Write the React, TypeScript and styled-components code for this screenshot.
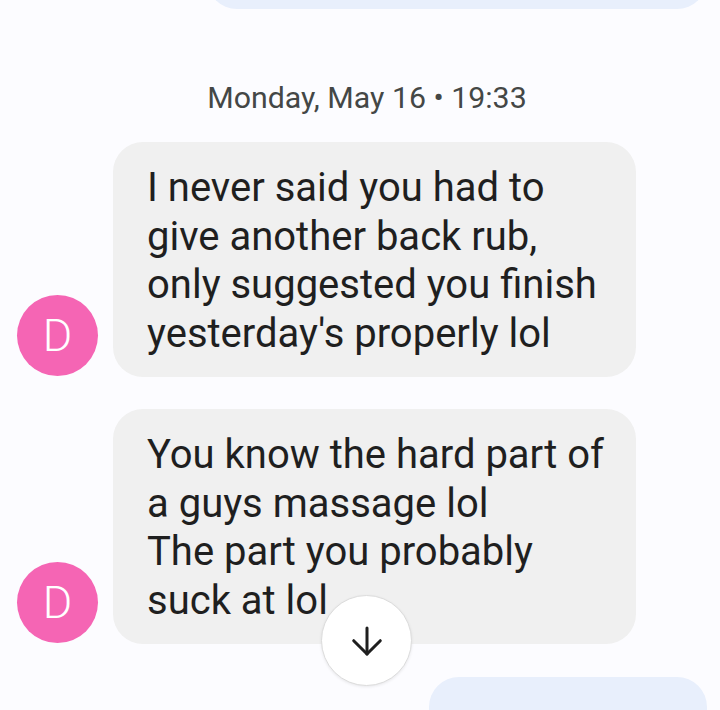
import React from "react";
import styled, { createGlobalStyle } from "styled-components";

const Global = createGlobalStyle`
  html, body { margin: 0; padding: 0; background: #fcfcff; }
  body { font-family: Roboto, "Noto Sans", "Liberation Sans", sans-serif; }
`;

const Page = styled.div`
  position: relative;
  width: 720px;
  height: 710px;
  overflow: hidden;
  background: #fcfcff;
  display: flex;
  flex-direction: column;
`;

const OutRow = styled.div<{ $top?: number }>`
  display: flex;
  justify-content: flex-end;
  padding-right: 13px;
  margin-top: ${(p) => p.$top ?? 0}px;
`;

const OutBubble = styled.div<{ $width: number }>`
  width: ${(p) => p.$width}px;
  min-height: 90px;
  background: #e8effc;
  border-radius: 30px;
  flex-shrink: 0;
`;

const DateHeader = styled.div`
  margin-top: 71px;
  text-align: center;
  font-size: 30.3px;
  line-height: 36px;
  color: #444746;
  padding-left: 14px;
`;

const Row = styled.div<{ $top: number }>`
  display: flex;
  align-items: flex-end;
  gap: 15px;
  padding-left: 17px;
  margin-top: ${(p) => p.$top}px;
`;

const Avatar = styled.div`
  width: 81px;
  height: 81px;
  border-radius: 50%;
  background: #f565b4;
  color: #ffffff;
  display: flex;
  align-items: center;
  justify-content: center;
  font-size: 45px;
  font-weight: 300;
  flex-shrink: 0;
  margin-bottom: 1px;
`;

const Bubble = styled.div`
  width: 523px;
  box-sizing: border-box;
  background: #f0f0f0;
  border-radius: 30px;
  padding: 22px 20px 18px 34px;
  font-size: 40px;
  line-height: 48.7px;
  color: #1f1f1f;
  white-space: pre;
`;

const ScrollButton = styled.button`
  position: absolute;
  left: 321px;
  top: 595px;
  width: 91px;
  height: 91px;
  border-radius: 50%;
  background: #ffffff;
  border: 1px solid #dcdcdc;
  box-shadow: 0 1px 3px rgba(0, 0, 0, 0.08);
  display: flex;
  align-items: center;
  justify-content: center;
  padding: 0;
  cursor: pointer;
`;

const ArrowDown = () => (
  <svg width="32" height="32" viewBox="0 0 32 32" fill="none" stroke="#1f1f1f" strokeWidth="3" strokeLinecap="round" strokeLinejoin="round">
    <line x1="16" y1="3" x2="16" y2="29" />
    <polyline points="2.7,15.7 16,29 29.3,15.7" />
  </svg>
);

const messages = [
  ["I never said you had to", "give another back rub,", "only suggested you finish", "yesterday's properly lol"],
  ["You know the hard part of", "a guys massage lol", "The part you probably", "suck at lol"],
];

export default function App() {
  return (
    <>
      <Global />
      <Page>
        <OutRow $top={-81}>
          <OutBubble $width={500} />
        </OutRow>
        <DateHeader>Monday, May 16 • 19:33</DateHeader>
        <Row $top={26}>
          <Avatar>D</Avatar>
          <Bubble>{messages[0].join("\n")}</Bubble>
        </Row>
        <Row $top={32}>
          <Avatar>D</Avatar>
          <Bubble>{messages[1].join("\n")}</Bubble>
        </Row>
        <OutRow $top={33}>
          <OutBubble $width={278} />
        </OutRow>
        <ScrollButton aria-label="Scroll to bottom">
          <ArrowDown />
        </ScrollButton>
      </Page>
    </>
  );
}
